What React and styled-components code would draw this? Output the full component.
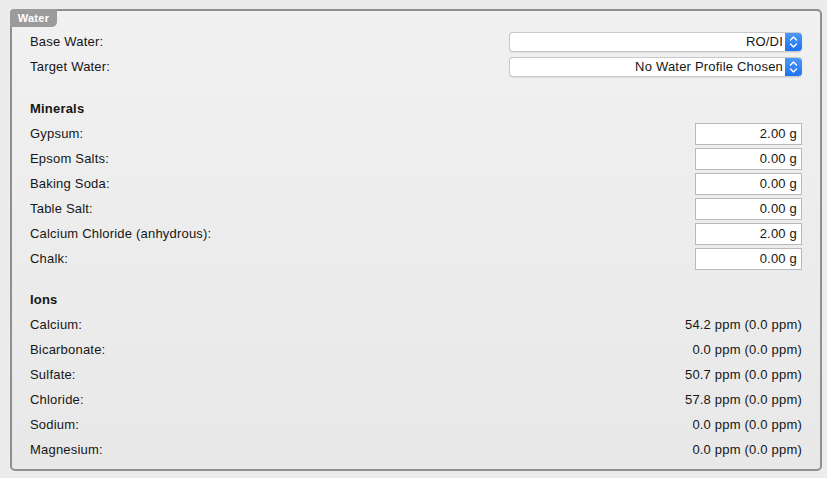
import React from "react";
import styled, { createGlobalStyle } from "styled-components";

const Global = createGlobalStyle`
  html, body { margin: 0; padding: 0; }
  body {
    background: #ececec;
    font-family: "Liberation Sans", Arial, sans-serif;
    font-size: 13px;
    letter-spacing: 0.2px;
    color: #161616;
  }
`;

const Page = styled.div`
  padding: 9px 5px 7px 10px;
  width: 827px;
  box-sizing: border-box;
`;

const Box = styled.section`
  position: relative;
  border: 2px solid #8f8f8f;
  border-radius: 5px;
  background: linear-gradient(#f1f1f1, #e8e8e8);
  padding: 18px 18px 7px 18px;
  display: flex;
  flex-direction: column;
`;

const Tab = styled.div`
  position: absolute;
  left: -2px;
  top: -2px;
  height: 18px;
  width: 47px;
  background: #9b9b9b;
  border-radius: 4px 0 5px 0;
  color: #fff;
  font-weight: bold;
  font-size: 11px;
  letter-spacing: 0.3px;
  display: flex;
  align-items: center;
  justify-content: center;
  box-sizing: border-box;
`;

const Row = styled.div`
  height: 25px;
  display: flex;
  align-items: center;
  justify-content: space-between;
`;

const Heading = styled(Row)`
  font-weight: bold;
  margin-top: ${(p) => p.$gap}px;
`;

const Select = styled.div`
  width: 293px;
  height: 20px;
  box-sizing: border-box;
  background: #fff;
  border: 1px solid #c9c9c9;
  border-right: none;
  border-radius: 4px;
  display: flex;
  align-items: center;
  justify-content: flex-end;
  overflow: hidden;
  box-shadow: 0 0.5px 1px rgba(0,0,0,0.08);
`;

const SelectText = styled.span`
  padding-right: 2px;
`;

const Stepper = styled.span`
  width: 17px;
  height: 20px;
  margin-top: -1px;
  margin-bottom: -1px;
  background: linear-gradient(#4f9bf8, #1d70ef);
  border-radius: 0 4px 4px 0;
  display: flex;
  align-items: center;
  justify-content: center;
`;

const Field = styled.div`
  width: 107px;
  height: 22px;
  box-sizing: border-box;
  background: #fff;
  border: 1px solid #b9b9b9;
  display: flex;
  align-items: center;
  justify-content: flex-end;
  padding-right: 4px;
`;

const Value = styled.span``;

const Chevrons = () => (
  <svg width="9" height="14" viewBox="0 0 9 14" fill="none" stroke="#fff" strokeWidth="1.4" strokeLinecap="round" strokeLinejoin="round">
    <path d="M1.5 5 L4.5 2 L7.5 5" />
    <path d="M1.5 9 L4.5 12 L7.5 9" />
  </svg>
);

const minerals = [
  ["Gypsum:", "2.00 g"],
  ["Epsom Salts:", "0.00 g"],
  ["Baking Soda:", "0.00 g"],
  ["Table Salt:", "0.00 g"],
  ["Calcium Chloride (anhydrous):", "2.00 g"],
  ["Chalk:", "0.00 g"],
];

const ions = [
  ["Calcium:", "54.2 ppm (0.0 ppm)"],
  ["Bicarbonate:", "0.0 ppm (0.0 ppm)"],
  ["Sulfate:", "50.7 ppm (0.0 ppm)"],
  ["Chloride:", "57.8 ppm (0.0 ppm)"],
  ["Sodium:", "0.0 ppm (0.0 ppm)"],
  ["Magnesium:", "0.0 ppm (0.0 ppm)"],
];

export default function App() {
  return (
    <Page>
      <Global />
      <Box>
        <Tab>Water</Tab>
        <Row>
          <span>Base Water:</span>
          <Select>
            <SelectText>RO/DI</SelectText>
            <Stepper><Chevrons /></Stepper>
          </Select>
        </Row>
        <Row>
          <span>Target Water:</span>
          <Select>
            <SelectText>No Water Profile Chosen</SelectText>
            <Stepper><Chevrons /></Stepper>
          </Select>
        </Row>
        <Heading $gap={17}>Minerals</Heading>
        {minerals.map(([l, v]) => (
          <Row key={l}>
            <span>{l}</span>
            <Field>{v}</Field>
          </Row>
        ))}
        <Heading $gap={16}>Ions</Heading>
        {ions.map(([l, v]) => (
          <Row key={l}>
            <span>{l}</span>
            <Value>{v}</Value>
          </Row>
        ))}
      </Box>
    </Page>
  );
}
